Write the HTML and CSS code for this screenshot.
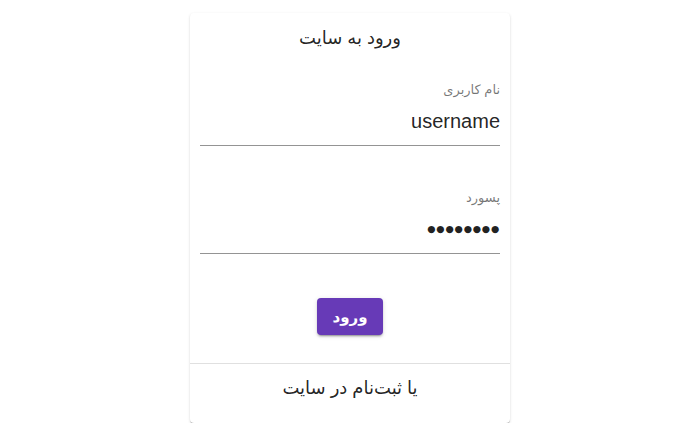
FILE: index.html
```html
<!DOCTYPE html>
<html lang="fa" dir="rtl">
<head>
<meta charset="utf-8">
<title>ورود به سایت</title>
<link rel="stylesheet" href="styles.css">
</head>
<body>
<main class="page">
  <section class="card">
    <h1 class="card-title">ورود به سایت</h1>
    <form class="form">
      <div class="field">
        <label class="field-label">نام کاربری</label>
        <div class="field-value" dir="ltr">username</div>
      </div>
      <div class="field">
        <label class="field-label">پسورد</label>
        <div class="field-value dots" dir="ltr">●●●●●●●●</div>
      </div>
      <div class="actions">
        <button type="button" class="btn-primary">ورود</button>
      </div>
    </form>
    <div class="card-footer">یا ثبت‌نام در سایت</div>
  </section>
</main>
</body>
</html>
```
FILE: styles.css
```css
* { box-sizing: border-box; }
html, body { margin: 0; padding: 0; background: #ffffff; }
body {
  font-family: "Liberation Sans", "DejaVu Sans", sans-serif;
  color: rgba(0,0,0,0.87);
}
.page {
  display: flex;
  justify-content: center;
  padding-top: 13px;
}
.card {
  width: 320px;
  background: #fff;
  border-radius: 4px;
  box-shadow: 0 2px 1px -1px rgba(0,0,0,0.25), 0 1px 1px 0 rgba(0,0,0,0.14), 0 1px 3px 0 rgba(0,0,0,0.12);
  display: flex;
  flex-direction: column;
}
.card-title {
  margin: 0;
  padding-top: 13px;
  font-size: 18px;
  line-height: 24px;
  font-weight: normal;
  text-align: center;
}
.form {
  display: flex;
  flex-direction: column;
  padding: 0 10px;
}
.field {
  display: flex;
  flex-direction: column;
  gap: 10px;
  padding-top: 32px;
  padding-bottom: 11px;
  border-bottom: 1px solid rgba(0,0,0,0.42);
}
.field + .field { padding-top: 44px; }
.field-label {
  font-size: 13px;
  line-height: 16px;
  color: rgba(0,0,0,0.54);
  text-align: right;
}
.field-value {
  font-size: 20px;
  line-height: 26px;
  text-align: right;
  color: rgba(0,0,0,0.87);
}
.dots {
  font-family: "DejaVu Sans", sans-serif;
  font-size: 9.5px;
  letter-spacing: 0.8px;
  color: #222;
}
.actions {
  display: flex;
  justify-content: center;
  padding-top: 44px;
  padding-bottom: 28px;
}
.btn-primary {
  width: 66px;
  height: 37px;
  border: none;
  border-radius: 4px;
  background: #673ab7;
  color: #fff;
  font-family: "DejaVu Sans", sans-serif;
  font-size: 15px;
  font-weight: bold;
  box-shadow: 0 3px 1px -2px rgba(0,0,0,0.2), 0 2px 2px 0 rgba(0,0,0,0.14), 0 1px 5px 0 rgba(0,0,0,0.12);
}
.card-footer {
  border-top: 1px solid #e0e0e0;
  padding-top: 12px;
  padding-bottom: 23px;
  font-size: 18px;
  line-height: 24px;
  text-align: center;
}
```
